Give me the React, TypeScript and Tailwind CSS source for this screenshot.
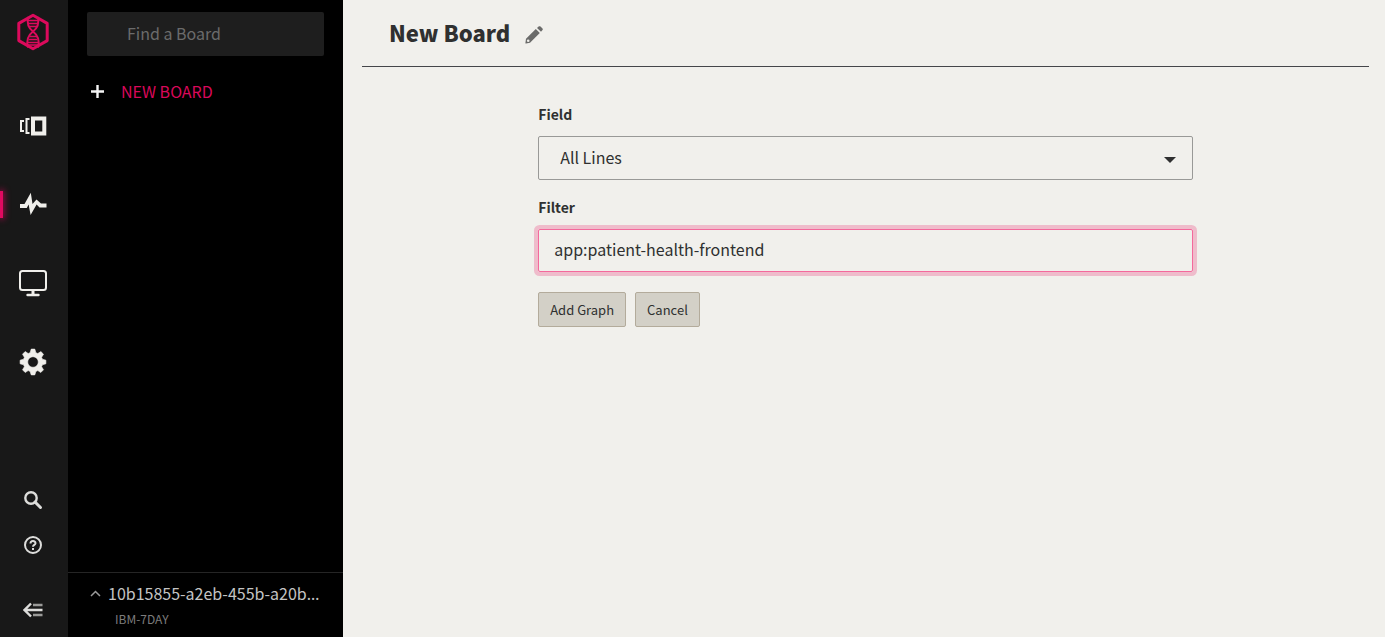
import { useState } from "react";
import type { ReactNode } from "react";

function LogoIcon() {
  return (
    <svg width="34" height="38" viewBox="0 0 34 38" fill="none" stroke="#dc0a5c" aria-hidden="true">
      <path d="M17 2.2 31.2 10.4V27.6L17 35.8 2.8 27.6V10.4Z" strokeWidth="3" strokeLinejoin="round" />
      <path d="M12 4C10.5 11.5 13 15.5 17 18.5S24 27 22 34.5" strokeWidth="2" />
      <path d="M22 4C23.5 11.5 21 15.5 17 18.5S10 27 12 34.5" strokeWidth="2" />
      <path d="M12 7.5H22M12 10.5H22M13 13.5H21M14 23.5H21M12.5 26.5H21.5M12 29.5H22M12 32H22" strokeWidth="1.3" />
    </svg>
  );
}

function ViewsIcon() {
  return (
    <svg width="28" height="22" viewBox="0 0 28 22" fill="none" stroke="#f0efeb" aria-hidden="true">
      <path d="M5 7H2V17H5" strokeWidth="2" />
      <path d="M10.5 5H7.5V19H10.5" strokeWidth="2" />
      <path d="M14 4.5H25.3V19.5H14Z" strokeWidth="4" />
    </svg>
  );
}

function PulseIcon() {
  return (
    <svg width="28" height="24" viewBox="0 0 28 24" fill="#f0efeb" aria-hidden="true">
      <path d="M1 12H5.5L11.8 0.8 13.5 12 17.5 7.5 22 11.5H27.5V15.5H20.5L17.6 12.5 11.6 23 9.6 12.5 7.8 16H1Z" />
    </svg>
  );
}

function ScreenIcon() {
  return (
    <svg width="28" height="28" viewBox="0 0 28 28" fill="none" stroke="#f0efeb" strokeWidth="2" aria-hidden="true">
      <rect x="1" y="2" width="26" height="19" rx="2.5" />
      <path d="M14 21V26" strokeWidth="3" />
      <path d="M8.5 26H19.5" strokeWidth="2.4" strokeLinecap="round" />
    </svg>
  );
}

function GearIcon() {
  return (
    <svg width="28" height="28" viewBox="0 0 28 28" fill="#f0efeb" aria-hidden="true">
      <path
        fillRule="evenodd"
        stroke="#f0efeb"
        strokeWidth="0.6"
        strokeLinejoin="round"
        d="M12.2 1.1H15.8L16.9 4.7 18.8 5.5 21.9 3.6 24.5 6.2 22.6 9.3 23.4 11.2 26.9 12.2V15.8L23.4 16.8 22.6 18.7 24.5 21.8 21.8 24.5 18.8 22.6 16.9 23.4 15.8 26.9H12.2L11.1 23.4 9.2 22.6 6.2 24.5 3.5 21.8 5.4 18.7 4.6 16.8 1.1 15.8V12.2L4.6 11.2 5.4 9.3 3.5 6.2 6.2 3.5 9.2 5.5 11.1 4.7ZM14 8.7A5.3 5.3 0 1 0 14 19.3 5.3 5.3 0 1 0 14 8.7Z"
      />
    </svg>
  );
}

function SearchIcon() {
  return (
    <svg width="20" height="20" viewBox="0 0 20 20" fill="none" stroke="#dddddb" aria-hidden="true">
      <circle cx="8" cy="8" r="5.7" strokeWidth="2.4" />
      <path d="M12 12 17.5 17.5" strokeWidth="3" strokeLinecap="round" />
    </svg>
  );
}

function HelpIcon() {
  return (
    <svg width="20" height="20" viewBox="0 0 20 20" fill="none" stroke="#dddddb" aria-hidden="true">
      <circle cx="10" cy="10" r="8" strokeWidth="2" />
      <path d="M7.5 8.5C7.5 5.3 12.5 5.4 12.5 8.2 12.5 10 10 9.8 10 11.8" strokeWidth="2" />
      <path d="M10 13V15" strokeWidth="2" />
    </svg>
  );
}

function CollapseIcon() {
  return (
    <svg width="20" height="16" viewBox="0 0 20 16" fill="none" stroke="#dddddb" strokeWidth="2.4" aria-hidden="true">
      <path d="M8 1.5 1.5 8 8 14.5M2 8H19.5" />
      <path d="M10 3H19.5M10 13H19.5" stroke="#9a9a98" />
    </svg>
  );
}

function PencilIcon() {
  return (
    <svg width="18" height="18" viewBox="0 0 18 18" fill="#6b6b6a" aria-hidden="true">
      <path d="M10.8 3 14.8 7 5 16.8 1 17.6C0.6 17.6 0.3 17.4 0.4 17L1 12.8ZM12 1.9 13.6 0.5C14.2 0 14.9 0 15.5 0.5L17.5 2.5C18 3 18 3.6 17.5 4.1L16 5.8Z" />
      <circle cx="3.2" cy="14.8" r="1.3" fill="#f1f0ec" />
    </svg>
  );
}

function NavItem({ label, active, children }: { label: string; active?: boolean; children: ReactNode }) {
  return (
    <li className="relative">
      {active && (
        <span className="absolute top-[27px] left-0 h-[27px] w-[3px] bg-[#e00a60] shadow-[0_0_6px_1px_#b0084c]" />
      )}
      <a
        href="#"
        aria-label={label}
        aria-current={active ? "page" : undefined}
        className="flex h-[79px] items-center justify-center"
      >
        {children}
      </a>
    </li>
  );
}

export default function App() {
  const [filter, setFilter] = useState("app:patient-health-frontend");

  return (
    <div className="flex min-h-screen bg-[#f1f0ec] font-['Noto_Sans_CJK_SC','Noto_Sans',sans-serif] text-base leading-6 text-[#2f3030]">
      <nav aria-label="Main" className="flex w-17 shrink-0 flex-col bg-[#181818] pt-[13px] pr-0.5 pb-[19px]">
        <a href="#" aria-label="Home" className="mb-[34px] flex justify-center">
          <LogoIcon />
        </a>
        <ul>
          <NavItem label="Views"><ViewsIcon /></NavItem>
          <NavItem label="Boards" active><PulseIcon /></NavItem>
          <NavItem label="Screens"><ScreenIcon /></NavItem>
          <NavItem label="Settings"><GearIcon /></NavItem>
        </ul>
        <div className="mt-auto flex flex-col items-center">
          <button type="button" aria-label="Search"><SearchIcon /></button>
          <button type="button" aria-label="Help" className="mt-[25px]"><HelpIcon /></button>
          <button type="button" aria-label="Collapse" className="mt-[47px]"><CollapseIcon /></button>
        </div>
      </nav>

      <aside className="flex w-[275px] shrink-0 flex-col bg-black">
        <div className="px-[19px] pt-3">
          <input
            type="search"
            aria-label="Find a Board"
            placeholder="Find a Board"
            className="h-11 w-full rounded-xs bg-[#1e1e1e] px-10 pb-0.5 text-white outline-none placeholder:text-[#6b6b6b]"
          />
        </div>
        <button type="button" className="mt-[23px] flex items-center gap-[17px] px-[23px] text-[#d8085a]">
          <svg width="13" height="13" viewBox="0 0 13 13" stroke="#f5f5f5" strokeWidth="2.4" aria-hidden="true">
            <path d="M6.5 0V13M0 6.5H13" />
          </svg>
          NEW BOARD
        </button>
        <button type="button" className="mt-auto flex gap-[7px] border-t border-[#252525] pt-2 pr-5 pb-2 pl-[22px] text-left">
          <svg width="11" height="24" viewBox="0 0 11 24" fill="none" stroke="#9a9a9a" strokeWidth="1.5" aria-hidden="true">
            <path d="M1 15 5.5 10.5 10 15" />
          </svg>
          <span className="min-w-0 flex-1">
            <span className="block whitespace-nowrap text-[#c4c4c4]">
              10b15855-a2eb-455b-a20b<span className="font-['Noto_Sans',sans-serif]">…</span>
            </span>
            <span className="mt-[3px] block pl-[7px] text-xs leading-5 text-[#7c7c7c]">IBM-7DAY</span>
          </span>
        </button>
      </aside>

      <main className="min-w-0 flex-1 pr-4 pl-[19px]">
        <header className="flex h-[67px] items-center gap-[15px] border-b border-[#45464a] pl-[27px]">
          <h1 className="pb-0.5 text-[22px] leading-8 font-black">New Board</h1>
          <button type="button" aria-label="Rename board" className="pt-1"><PencilIcon /></button>
        </header>
        <form className="mx-auto flex w-[65%] flex-col pt-[35px]" onSubmit={(e) => e.preventDefault()}>
          <label htmlFor="field" className="text-sm leading-6 font-bold">Field</label>
          <div className="mt-2.5 grid items-center">
            <select
              id="field"
              className="col-start-1 row-start-1 h-11 w-full appearance-none rounded-xs border border-[#999997] bg-transparent px-[21px] pb-0.5 outline-none"
            >
              <option>All Lines</option>
            </select>
            <svg
              width="12"
              height="6"
              viewBox="0 0 12 6"
              fill="#2f3030"
              aria-hidden="true"
              className="pointer-events-none col-start-1 row-start-1 mt-1 mr-[17px] justify-self-end"
            >
              <path d="M0 0H12L6 6Z" />
            </svg>
          </div>
          <label htmlFor="filter" className="mt-[15px] text-sm leading-6 font-bold">Filter</label>
          <input
            id="filter"
            type="text"
            value={filter}
            onChange={(e) => setFilter(e.target.value)}
            className="mt-2.5 h-[43px] rounded-xs border border-[#f4699c] px-[15px] pb-[3px] ring-4 ring-[#efbccb] outline-none"
          />
          <div className="mt-5 flex gap-[9px] text-[13px]">
            <button type="submit" className="h-[35px] rounded-xs border border-[#b3ab9b] bg-[#d3d0c7] px-[11px]">Add Graph</button>
            <button type="button" className="h-[35px] rounded-xs border border-[#b3ab9b] bg-[#d3d0c7] px-[11px]">Cancel</button>
          </div>
        </form>
      </main>
    </div>
  );
}
